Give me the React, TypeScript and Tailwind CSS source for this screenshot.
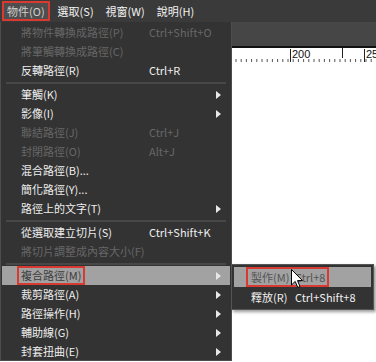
import React from "react";

type Item =
  | { kind: "sep" }
  | {
      kind: "item";
      label: string;
      shortcut?: string;
      disabled?: boolean;
      sub?: boolean;
      active?: boolean;
    };

const items: Item[] = [
  { kind: "item", label: "將物件轉換成路徑(P)", shortcut: "Ctrl+Shift+O", disabled: true },
  { kind: "item", label: "將筆觸轉換成路徑(C)", disabled: true },
  { kind: "item", label: "反轉路徑(R)", shortcut: "Ctrl+R" },
  { kind: "sep" },
  { kind: "item", label: "筆觸(K)", sub: true },
  { kind: "item", label: "影像(I)", sub: true },
  { kind: "item", label: "聯結路徑(J)", shortcut: "Ctrl+J", disabled: true },
  { kind: "item", label: "封閉路徑(O)", shortcut: "Alt+J", disabled: true },
  { kind: "item", label: "混合路徑(B)..." },
  { kind: "item", label: "簡化路徑(Y)..." },
  { kind: "item", label: "路徑上的文字(T)", sub: true },
  { kind: "sep" },
  { kind: "item", label: "從選取建立切片(S)", shortcut: "Ctrl+Shift+K" },
  { kind: "item", label: "將切片調整成內容大小(F)", disabled: true },
  { kind: "sep" },
  { kind: "item", label: "複合路徑(M)", sub: true, active: true },
  { kind: "item", label: "裁剪路徑(A)", sub: true },
  { kind: "item", label: "路徑操作(H)", sub: true },
  { kind: "item", label: "輔助線(G)", sub: true },
  { kind: "item", label: "封套扭曲(E)", sub: true },
];

const menus = ["物件(O)", "選取(S)", "視窗(W)", "說明(H)"];

function Arrow() {
  return (
    <svg width="5" height="8" viewBox="0 0 5 8">
      <polygon points="0,0 5,4 0,8" fill="#e8e8e8" />
    </svg>
  );
}

function Ruler() {
  const ticks: number[] = [];
  for (let x = 236; x < 376; x += 5.2) ticks.push(x);
  return (
    <svg width="376" height="15" viewBox="0 0 376 15" className="block">
      {ticks.map((x, i) => (
        <line key={i} x1={x} x2={x} y1="11" y2="14" stroke="#555" strokeWidth="1" />
      ))}
      <line x1="290.5" x2="290.5" y1="1" y2="14" stroke="#222" />
      <line x1="342.5" x2="342.5" y1="0" y2="10" stroke="#222" />
      <line x1="364.5" x2="364.5" y1="1" y2="14" stroke="#222" />
      <text x="292" y="10" fontSize="11" fill="#111" fontFamily="Liberation Sans, sans-serif">
        200
      </text>
      <text x="366" y="10" fontSize="11" fill="#111" fontFamily="Liberation Sans, sans-serif">
        25
      </text>
    </svg>
  );
}

function Cursor() {
  return (
    <svg width="13" height="20" viewBox="0 0 13 20" className="absolute left-[291px] top-[269px]">
      <path
        d="M0.5 0.5 L0.5 16 L4.2 12.4 L6.8 18.5 L9 17.6 L6.5 11.6 L11.5 11.6 Z"
        fill="#fff"
        stroke="#000"
        strokeWidth="1"
        strokeLinejoin="round"
      />
    </svg>
  );
}

export default function App() {
  return (
    <div
      className="relative w-[376px] h-[362px] overflow-hidden bg-white text-[11px]"
      style={{ fontFamily: '"Noto Sans CJK TC", "Noto Sans", sans-serif' }}
    >
      {/* Menu bar */}
      <div className="h-[22px] bg-[#3a3a3a] flex items-center pl-[2px] gap-[4px]">
        {menus.map((m, i) => (
          <div
            key={m}
            className={
              i === 0
                ? "h-[20px] px-[3px] flex items-center border-2 border-[#d83a32] bg-[#4e4e4e] text-[#d0d0d0]"
                : "h-[20px] px-[4px] flex items-center text-[#f2f2f2]"
            }
          >
            {m}
          </div>
        ))}
      </div>

      {/* Document window behind the menu */}
      <div className="h-[24px] bg-[#464646]" />
      <div className="h-[2px] bg-[#111]" />
      <Ruler />

      {/* Dropdown */}
      <div className="absolute left-0 top-[22px] w-[232px] h-[339px] bg-[#333] border border-t-0 border-[#4e4e4e] pt-[1px] px-[1px]">
        {items.map((it, i) =>
          it.kind === "sep" ? (
            <div key={i} className="h-[5px] flex items-center px-[4px]">
              <div className="h-[2px] w-full bg-[#474747]" />
            </div>
          ) : (
            <div
              key={i}
              className={
                "h-[19px] flex items-center " +
                (it.active ? "bg-[#a2a2a2] text-[#3c3c3c]" : it.disabled ? "text-[#676767]" : "text-[#efefef]")
              }
            >
              <div className="w-[147px] pl-[19px] shrink-0 flex">
                {it.active ? (
                  <span className="-ml-[4px] px-[2px] h-[19px] flex items-center border-2 border-[#d83a32]">
                    {it.label}
                  </span>
                ) : (
                  <span className="whitespace-nowrap">{it.label}</span>
                )}
              </div>
              <div className="flex-1">{it.shortcut}</div>
              <div className="w-[14px] shrink-0 flex items-center">{it.sub && <Arrow />}</div>
            </div>
          )
        )}
      </div>

      {/* Submenu */}
      <div className="absolute left-[231px] top-[264px] w-[143px] bg-[#333] border border-[#555] p-[2px] shadow-[2px_2px_3px_rgba(0,0,0,0.4)]">
        <div className="h-[20px] flex items-center bg-[#a2a2a2] text-[#555]">
          <span className="ml-[12px] pl-[3px] pr-[2px] h-[20px] flex items-center border-2 border-[#d83a32] whitespace-nowrap">
            <span className="w-[44px]">製作(M)</span>
            <span>Ctrl+8</span>
          </span>
        </div>
        <div className="h-[20px] flex items-center text-[#efefef] whitespace-nowrap">
          <span className="ml-[17px] w-[44px]">釋放(R)</span>
          <span>Ctrl+Shift+8</span>
        </div>
      </div>

      <Cursor />
    </div>
  );
}
